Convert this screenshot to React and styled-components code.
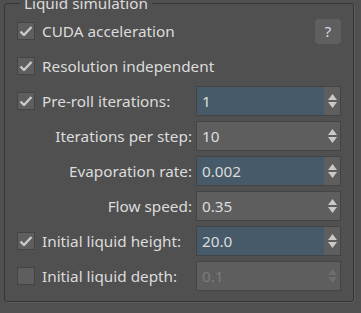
import React from 'react';
import styled, {createGlobalStyle} from 'styled-components';

const BG = '#505050';
const TEXT = '#dcdcdc';
const FIELD = '#5e5e5e';
const FIELD_BORDER = '#444444';
const HIGHLIGHT = '#465a69';

const GlobalStyle = createGlobalStyle`
  html, body {
    margin: 0;
    padding: 0;
    background: ${BG};
    overflow: hidden;
  }
  body {
    font-family: "Noto Sans", "Open Sans", sans-serif;
    font-size: 15.3px;
    color: ${TEXT};
  }
`;

const Page = styled.div`
  width: 361px;
  height: 313px;
  margin-top: -5px;
`;

const Group = styled.fieldset`
  margin: 0 7px 0 4px;
  padding: 5px 11px 10px 12px;
  border: 1px solid #363636;
  border-radius: 3px;
  box-shadow: 1px 1px 0 #5c5c5c;
  min-width: 0;
`;

const Legend = styled.legend`
  margin-left: 3px;
  padding: 0 4px;
  line-height: 16px;
  font-size: 15.3px;
  color: ${TEXT};
`;

const Grid = styled.div`
  display: grid;
  grid-template-columns: 175px 145px;
  grid-auto-rows: 30px;
  column-gap: 4px;
  row-gap: 5px;
`;

const CheckRow = styled.label`
  display: flex;
  align-items: center;
  gap: 7px;
  white-space: nowrap;
  grid-column: ${p => (p.wide ? '1 / 3' : 'auto')};
`;

const Box = styled.span`
  width: 18px;
  height: 18px;
  box-sizing: border-box;
  border: 1px solid ${FIELD_BORDER};
  background: ${FIELD};
  display: flex;
  align-items: center;
  justify-content: center;
  flex: none;
`;

const FieldLabel = styled.span`
  justify-self: end;
  align-self: center;
  white-space: nowrap;
`;

const HelpButton = styled.button`
  justify-self: end;
  align-self: center;
  width: 26px;
  height: 25px;
  padding: 0;
  border: none;
  border-radius: 4px;
  background: #5f5f5f;
  color: #d4dcea;
  font-family: inherit;
  font-size: 15px;
  line-height: 25px;
`;

const Spinner = styled.div`
  display: flex;
  height: 30px;
  box-sizing: border-box;
  border: 1px solid ${FIELD_BORDER};
  background: ${FIELD};
`;

const SpinValue = styled.div`
  flex: 1;
  display: flex;
  align-items: center;
  padding-left: 5px;
  background: ${p => (p.highlight ? HIGHLIGHT : 'transparent')};
  color: ${p => (p.disabled ? '#7b7b7b' : TEXT)};
`;

const SpinArrows = styled.div`
  width: 16px;
  display: flex;
  flex-direction: column;
  align-items: center;
  justify-content: center;
  gap: 2px;
  color: ${p => (p.disabled ? '#6e6e6e' : '#c9c9c9')};
`;

const NextTitle = styled.div`
  margin: 2px 0 0 12px;
  line-height: 20px;
`;

const Check = () => (
  <svg width="14" height="12" viewBox="0 0 14 12">
    <path d="M1.5 6.5 L5 10 L12.5 2" fill="none" stroke="#cbcbcb" strokeWidth="2.4" strokeLinejoin="round" />
  </svg>
);

const Triangle = ({down}) => (
  <svg width="9" height="6" viewBox="0 0 9 6">
    <path d={down ? 'M0 0 H9 L4.5 6 Z' : 'M0 6 H9 L4.5 0 Z'} fill="currentColor" />
  </svg>
);

const CheckBox = ({checked, children, wide}) => (
  <CheckRow wide={wide}>
    <Box>{checked && <Check />}</Box>
    {children}
  </CheckRow>
);

const NumberField = ({value, highlight, disabled}) => (
  <Spinner>
    <SpinValue highlight={highlight} disabled={disabled}>{value}</SpinValue>
    <SpinArrows disabled={disabled}>
      <Triangle />
      <Triangle down />
    </SpinArrows>
  </Spinner>
);

export default function App() {
  return (
    <Page>
      <GlobalStyle />
      <Group>
        <Legend>Liquid simulation</Legend>
        <Grid>
          <CheckBox checked>CUDA acceleration</CheckBox>
          <HelpButton>?</HelpButton>

          <CheckBox checked wide>Resolution independent</CheckBox>

          <CheckBox checked>Pre-roll iterations:</CheckBox>
          <NumberField value="1" highlight />

          <FieldLabel>Iterations per step:</FieldLabel>
          <NumberField value="10" />

          <FieldLabel>Evaporation rate:</FieldLabel>
          <NumberField value="0.002" highlight />

          <FieldLabel>Flow speed:</FieldLabel>
          <NumberField value="0.35" />

          <CheckBox checked>Initial liquid height:</CheckBox>
          <NumberField value="20.0" highlight />

          <CheckBox>Initial liquid depth:</CheckBox>
          <NumberField value="0.1" disabled />
        </Grid>
      </Group>
      <NextTitle>Templates</NextTitle>
    </Page>
  );
}
